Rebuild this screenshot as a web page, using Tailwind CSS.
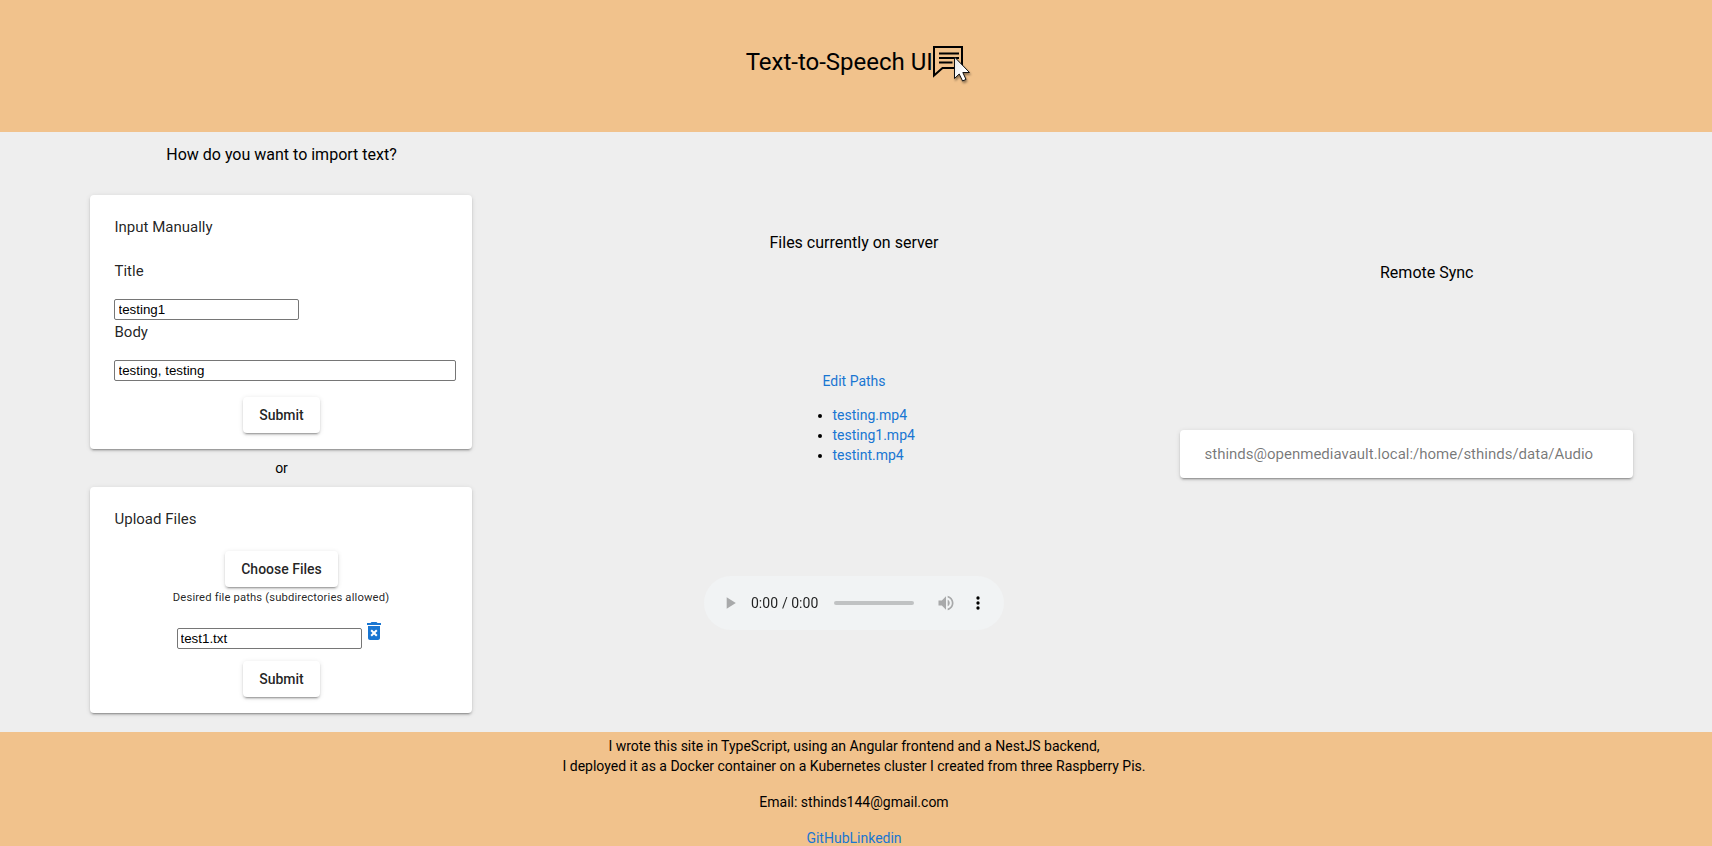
<!DOCTYPE html>
<html lang="en">
<head>
<meta charset="utf-8">
<title>Text-to-Speech UI</title>
<script src="https://cdn.jsdelivr.net/npm/@tailwindcss/browser@4"></script>
</head>
<body class="relative h-[846px] overflow-hidden bg-[#eeeeee] font-[Roboto,sans-serif] text-sm leading-5 text-black">
<header class="flex h-[132px] justify-center bg-[#f1c28c] pr-px pt-[43px]">
  <h1 class="mt-[3px] text-2xl leading-8">Text-to-Speech UI</h1>
  <div class="relative -ml-[1.500px] h-9 w-[34px]">
    <svg class="size-9" viewBox="0 0 36 36" fill="none" stroke="#000"><path stroke-width="2" d="M3 4h28v21H11.500L3 32.500z"/><path stroke-width="2" d="M8 10.500h20M8 15h20M8 19.500h13.500"/></svg>
    <svg class="absolute left-[22px] top-3 h-[28px] w-[20px] drop-shadow-[1px_2px_1px_rgba(0,0,0,0.4)]" viewBox="0 0 20 28"><defs><linearGradient id="c" x2="1" y2="1"><stop stop-color="#e4e4e4"/><stop offset="0.6" stop-color="#fff"/></linearGradient></defs><path d="M1.500 2v21.500l4.700-4.500 3.400 7 3.400-1.600-3.200-6.900h6.700z" fill="url(#c)" stroke="#111" stroke-width="1"/></svg>
  </div>
</header>
<main class="flex h-[600px]">
  <section class="flex w-[562px] flex-col items-center pt-[11px]">
    <h2 class="pl-px text-base leading-6">How do you want to import text?</h2>
    <div class="mt-7 flex h-[254px] w-[382px] flex-col rounded bg-white px-6 pt-5 text-[15px] leading-6 text-black/87 shadow-[0_3px_1px_-2px_rgba(0,0,0,0.2),0_2px_2px_rgba(0,0,0,0.14),0_1px_5px_rgba(0,0,0,0.12)]">
      <p class="pl-[0.5px]">Input Manually</p>
      <label class="mt-5 pl-[0.5px]">Title</label>
      <input class="mt-4 h-[21px] w-[185px] rounded-[2px] border border-[#767676] px-[3.500px] font-['Liberation_Sans',sans-serif] text-[13.333px] leading-none text-black" value="testing1">
      <label class="pl-[0.5px]">Body</label>
      <input class="mt-4 h-[21px] w-[342px] rounded-[2px] border border-[#767676] px-[3.500px] font-['Liberation_Sans',sans-serif] text-[13.333px] leading-none text-black" value="testing, testing">
      <button class="mt-4 h-9 w-[77px] self-center rounded bg-white pl-px text-sm font-medium shadow-[0_3px_1px_-2px_rgba(0,0,0,0.2),0_2px_2px_rgba(0,0,0,0.14),0_1px_5px_rgba(0,0,0,0.12)]">Submit</button>
    </div>
    <p class="my-[9px] pl-px">or</p>
    <div class="flex h-[226px] w-[382px] flex-col items-center rounded bg-white px-6 pt-5 text-black/87 shadow-[0_3px_1px_-2px_rgba(0,0,0,0.2),0_2px_2px_rgba(0,0,0,0.14),0_1px_5px_rgba(0,0,0,0.12)]">
      <p class="self-start pl-[0.5px] text-[15px] leading-6">Upload Files</p>
      <button class="mt-5 h-9 w-[113px] rounded bg-white pl-px text-sm font-medium shadow-[0_3px_1px_-2px_rgba(0,0,0,0.2),0_2px_2px_rgba(0,0,0,0.14),0_1px_5px_rgba(0,0,0,0.12)]">Choose Files</button>
      <p class="mt-px text-[11.250px] leading-5 tracking-[0.14px]">Desired file paths (subdirectories allowed)</p>
      <div class="mt-[11px] flex h-[30px] items-start">
        <input class="mt-[9px] h-[21px] w-[185px] rounded-[2px] border border-[#767676] px-[3px] font-['Liberation_Sans',sans-serif] text-[13.333px] leading-none text-black" value="test1.txt">
        <svg class="size-6" viewBox="0 0 24 24" fill="#1976d2"><path fill-rule="evenodd" d="M6 19c0 1.100.9 2 2 2h8c1.100 0 2-.9 2-2V7H6v12zm2.460-7.120 1.410-1.410L12 12.590l2.120-2.120 1.410 1.410L13.410 14l2.120 2.120-1.410 1.410L12 15.410l-2.120 2.120-1.410-1.410L10.590 14l-2.130-2.120zM15.500 4l-1-1h-5l-1 1H5v2h14V4z"/></svg>
      </div>
      <button class="mt-3 h-9 w-[77px] rounded bg-white pl-px text-sm font-medium shadow-[0_3px_1px_-2px_rgba(0,0,0,0.2),0_2px_2px_rgba(0,0,0,0.14),0_1px_5px_rgba(0,0,0,0.12)]">Submit</button>
    </div>
  </section>
  <section class="flex w-[584px] flex-col items-center pt-[99px]">
    <h2 class="text-base leading-6">Files currently on server</h2>
    <a class="mt-[116px] text-[#1976d2]">Edit Paths</a>
    <ul class="ml-10 mt-[14px] w-[83px] list-disc">
      <li><a class="text-[#1976d2]">testing.mp4</a></li>
      <li><a class="text-[#1976d2]">testing1.mp4</a></li>
      <li><a class="text-[#1976d2]">testint.mp4</a></li>
    </ul>
    <audio controls class="mt-[111px] h-[54px] w-[300px]"></audio>
  </section>
  <section class="flex w-[566px] flex-col pl-[34px] pt-[129px]">
    <h2 class="pl-[200px] text-base leading-6">Remote Sync</h2>
    <div class="mt-[145px] flex h-12 w-[453px] items-center rounded bg-white pl-[24.500px] text-[15px] leading-6 text-black/54 shadow-[0_3px_1px_-2px_rgba(0,0,0,0.2),0_2px_2px_rgba(0,0,0,0.14),0_1px_5px_rgba(0,0,0,0.12)]">sthinds@openmediavault.local:/home/sthinds/data/Audio</div>
  </section>
</main>
<footer class="h-[114px] overflow-hidden bg-[#f1c28c] pr-1 pt-1 text-center">
  <p>I wrote this site in TypeScript, using an Angular frontend and a NestJS backend,<br>I deployed it as a Docker container on a Kubernetes cluster I created from three Raspberry Pis.</p>
  <p class="mt-4">Email: sthinds144@gmail.com</p>
  <p class="mt-4 text-[#1976d2]"><a>GitHub</a><a>Linkedin</a></p>
</footer>
</body>
</html>
